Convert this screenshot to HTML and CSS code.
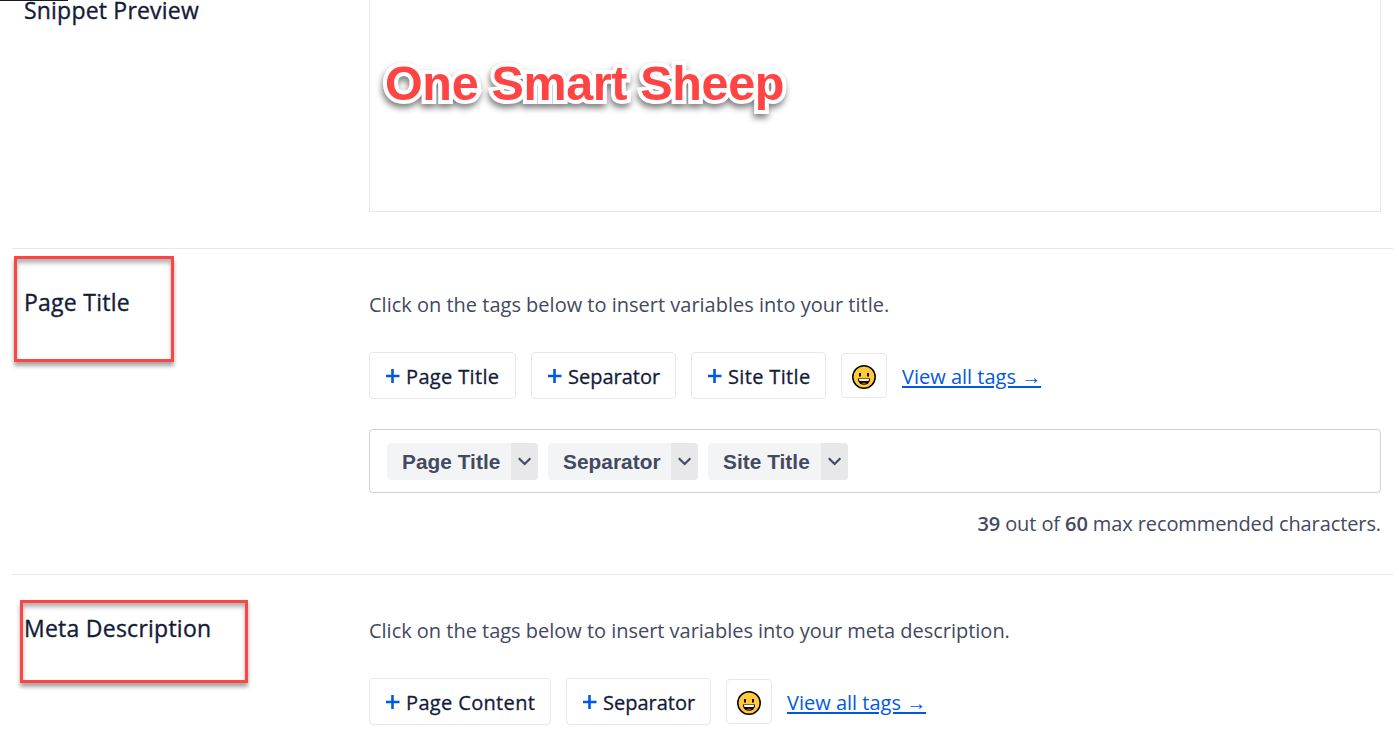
FILE: index.html
```html
<!DOCTYPE html>
<html lang="en">
<head>
    <meta charset="UTF-8">
    <meta name="viewport" content="width=device-width, initial-scale=1.0">
    <title>Search Appearance</title>
    <link rel="stylesheet" href="styles.css">
</head>
<body>
    <svg class="sprite" xmlns="http://www.w3.org/2000/svg">
        <symbol id="plus" viewBox="0 0 14 14">
            <path d="M6.5 0v14M0 7h13.5" fill="none" stroke="currentColor" stroke-width="2.6"/>
        </symbol>
        <symbol id="caret" viewBox="0 0 14 10">
            <path d="M.8 2.2L6.6 8l5.8-5.8" fill="none" stroke="currentColor" stroke-width="2.1"/>
        </symbol>
        <symbol id="smile" viewBox="0 0 24 24">
            <circle cx="12" cy="12" r="11.2" fill="#ffc83d" stroke="#000" stroke-width="1.5"/>
            <path d="M8 8v3.5M16 8v3.5" stroke="#000" stroke-width="1.9"/>
            <path d="M6 13.4h12v1.2a6 5.2 0 0 1-12 0z" fill="#000"/>
            <path d="M7 14h10q0 1.1-.5 2h-9q-.5-.9-.5-2z" fill="#fff"/>
            <path d="M9.4 18.3q2.6-1.8 5.2 0-2.6 1.4-5.2 0z" fill="#f03a17"/>
        </symbol>
    </svg>

    <div class="tab-edge"></div>

    <div class="settings">
        <div class="row row-preview">
            <div class="label">Snippet Preview</div>
            <div class="content">
                <div class="preview-box">
                    <span class="watermark">One Smart Sheep</span>
                </div>
            </div>
        </div>

        <div class="row">
            <div class="label">Page Title</div>
            <div class="content">
                <p class="description">Click on the tags below to insert variables into your title.</p>
                <div class="tags">
                    <button class="tag tag-page"><svg><use href="#plus"/></svg><span>Page Title</span></button>
                    <button class="tag tag-separator"><svg><use href="#plus"/></svg><span>Separator</span></button>
                    <button class="tag tag-site"><svg><use href="#plus"/></svg><span>Site Title</span></button>
                    <button class="emoji"><svg><use href="#smile"/></svg></button>
                    <a class="view-all" href="#">View all tags →</a>
                </div>
                <div class="editor">
                    <div class="chip chip-page"><span>Page Title</span><i><svg><use href="#caret"/></svg></i></div>
                    <div class="chip chip-separator"><span>Separator</span><i><svg><use href="#caret"/></svg></i></div>
                    <div class="chip chip-site"><span>Site Title</span><i><svg><use href="#caret"/></svg></i></div>
                </div>
                <div class="counter"><b>39</b> out of <b>60</b> max recommended characters.</div>
            </div>
            <div class="highlight highlight-title"></div>
        </div>

        <div class="row row-last">
            <div class="label">Meta Description</div>
            <div class="content">
                <p class="description">Click on the tags below to insert variables into your meta description.</p>
                <div class="tags">
                    <button class="tag tag-content"><svg><use href="#plus"/></svg><span>Page Content</span></button>
                    <button class="tag tag-separator"><svg><use href="#plus"/></svg><span>Separator</span></button>
                    <button class="emoji"><svg><use href="#smile"/></svg></button>
                    <a class="view-all" href="#">View all tags →</a>
                </div>
            </div>
            <div class="highlight highlight-meta"></div>
        </div>
    </div>
</body>
</html>
```

FILE: styles.css
```css
* { box-sizing: border-box; }
body { margin: 0; height: 751px; overflow: hidden; background: #fff; color: #141b38; font-family: "Segoe UI", "Open Sans", "Noto Sans", sans-serif; font-size: 20px; line-height: 30px; }
.sprite { display: none; }
.tab-edge { position: absolute; top: 0; left: 0; width: 68px; height: 1px; background: #1d1a1e; }

.settings { margin: 0 6px 0 12px; }
.row { display: flex; position: relative; height: 326px; padding: 38px 12px 0 12px; border-bottom: 1px solid #e8e8eb; }
.row-preview { height: 249px; padding-top: 0; }
.row-last { border-bottom: none; height: 176px; }
.label { width: 345px; flex-shrink: 0; margin-top: -1px; font-size: 23px; font-weight: 500; line-height: 32px; letter-spacing: 0.25px; white-space: nowrap; -webkit-text-stroke: 0.35px currentColor; }
.row-preview .label { margin-top: -6px; letter-spacing: 0.2px; }
.content { flex: 1; min-width: 0; }

.preview-box { height: 212px; padding: 55px 0 0 15px; border: 1px solid #e8e8eb; border-top: none; }
.watermark { display: block; color: #ff4444; font: bold 48.5px/56px "Liberation Sans", Arial, sans-serif; letter-spacing: -0.35px; white-space: nowrap; -webkit-text-stroke: 8px #fff; stroke-linejoin: round; paint-order: stroke fill; filter: drop-shadow(-1px 4px 3px rgba(0,0,0,0.5)); }

.description { margin: 3px 0 32px; color: #434960; white-space: nowrap; }
.row-last .description { letter-spacing: -0.02px; }
.tags { display: flex; align-items: center; gap: 15px; height: 47px; }
.tag { display: flex; align-items: center; gap: 6px; height: 47px; padding: 0 0 0 16px; background: #fff; border: 1px solid #e8e8eb; border-radius: 4px; color: #141b38; font: 500 20px/30px "Segoe UI", "Open Sans", "Noto Sans", sans-serif; letter-spacing: 0.35px; white-space: nowrap; -webkit-text-stroke: 0.3px currentColor; }
.tag span { padding-top: 2px; }
.tag svg { width: 14px; height: 14px; color: #005ae0; flex-shrink: 0; }
.tag-page { width: 147px; }
.tag-separator { width: 145px; letter-spacing: 0; }
.tag-site { width: 135px; }
.tag-content { width: 182px; }
.emoji { display: flex; align-items: center; justify-content: center; width: 46px; height: 45px; padding: 3px 0 0; background: #fff; border: 1px solid #e8e8eb; border-radius: 4px; }
.emoji svg { width: 24px; height: 24px; }
.view-all { padding-top: 2px; color: #005ae0; text-decoration: underline; text-decoration-thickness: 2px; text-underline-offset: 2px; white-space: nowrap; }

.editor { display: flex; align-items: center; gap: 10px; height: 64px; margin-top: 30px; padding: 0 17px; border: 1px solid #d0d1d7; border-radius: 4px; }
.chip { display: flex; justify-content: space-between; height: 37px; padding-left: 15px; border-radius: 4px; overflow: hidden; background: #f3f4f5; color: #434960; font: bold 20.8px/37px "Liberation Sans", Arial, sans-serif; letter-spacing: 0.05px; white-space: nowrap; }
.chip i { display: flex; align-items: center; justify-content: center; width: 27px; background: #e8e8eb; }
.chip svg { width: 14px; height: 10px; }
.chip-page { width: 151px; }
.chip-separator { width: 150px; }
.chip-site { width: 140px; }
.counter { margin-top: 16px; color: #434960; text-align: right; white-space: nowrap; letter-spacing: -0.1px; }
.counter b { font-weight: 600; }

/* red callout frames */
.highlight { position: absolute; border: 3px solid #ff4444; box-shadow: 0 4px 4px rgba(0,0,0,0.35), inset 0 4px 4px rgba(0,0,0,0.3); }
.highlight-title { left: 2px; top: 7px; width: 160px; height: 106px; }
.highlight-meta { left: 8px; top: 25px; width: 228px; height: 83px; }
```
